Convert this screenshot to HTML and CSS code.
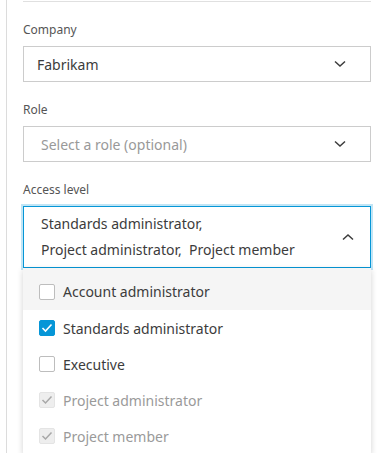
FILE: index.html
```html
<!DOCTYPE html>
<html lang="en">
<head>
    <meta charset="UTF-8">
    <meta name="viewport" content="width=device-width, initial-scale=1.0">
    <title>Add member</title>
    <link rel="stylesheet" href="styles.css">
</head>
<body>
    <div class="panel">
        <div class="content">
            <!-- Company -->
            <div class="field">
                <label class="label">Company</label>
                <div class="select">
                    <span class="value">Fabrikam</span>
                    <svg class="chevron" width="12" height="8" viewBox="0 0 12 8"><path d="M1 1.5 L6 6 L11 1.5" fill="none" stroke="#3c3c3c" stroke-width="1.5"/></svg>
                </div>
            </div>

            <!-- Role -->
            <div class="field">
                <label class="label">Role</label>
                <div class="select">
                    <span class="value placeholder">Select a role (optional)</span>
                    <svg class="chevron" width="12" height="8" viewBox="0 0 12 8"><path d="M1 1.5 L6 6 L11 1.5" fill="none" stroke="#3c3c3c" stroke-width="1.5"/></svg>
                </div>
            </div>

            <!-- Access level -->
            <div class="field">
                <label class="label">Access level</label>
                <div class="select open">
                    <span class="value multi">Standards administrator,<br>Project administrator,&nbsp; Project member</span>
                    <svg class="chevron" width="12" height="8" viewBox="0 0 12 8"><path d="M1 6.5 L6 2 L11 6.5" fill="none" stroke="#3c3c3c" stroke-width="1.5"/></svg>
                </div>
                <div class="menu">
                    <div class="item hover">
                        <span class="box"></span>Account administrator
                    </div>
                    <div class="item">
                        <span class="box checked"><svg width="12" height="10" viewBox="0 0 12 10"><path d="M1.5 5 L4.5 8 L10.5 1.5" fill="none" stroke="#fff" stroke-width="1.6"/></svg></span>Standards administrator
                    </div>
                    <div class="item">
                        <span class="box"></span>Executive
                    </div>
                    <div class="item disabled">
                        <span class="box"><svg width="12" height="10" viewBox="0 0 12 10"><path d="M1.5 5 L4.5 8 L10.5 1.5" fill="none" stroke="#a8a8a8" stroke-width="1.5"/></svg></span>Project administrator
                    </div>
                    <div class="item disabled">
                        <span class="box"><svg width="12" height="10" viewBox="0 0 12 10"><path d="M1.5 5 L4.5 8 L10.5 1.5" fill="none" stroke="#a8a8a8" stroke-width="1.5"/></svg></span>Project member
                    </div>
                </div>
            </div>
        </div>
    </div>
</body>
</html>
```

FILE: styles.css
```css
body {
    margin: 0;
    padding: 0;
    background: #ffffff;
    font-family: 'Noto Sans', 'Open Sans', sans-serif;
    color: #3c3c3c;
}
.panel {
    margin-left: 6px;
    border-left: 1px solid #dcdcdc;
    height: 453px;
    overflow: hidden;
}
.content {
    margin: 1px 8px 0 16px;
    border-top: 1px solid #e0e0e0;
    padding-top: 20px;
}
.field {
    margin-bottom: 20px;
}
.label {
    display: block;
    font-size: 12px;
    line-height: 16px;
    color: #555555;
    margin-bottom: 8px;
}
.select {
    display: flex;
    align-items: center;
    justify-content: space-between;
    border: 1px solid #cccccc;
    height: 34px;
    padding: 0 16px 0 13px;
    font-size: 14px;
}
.select.open {
    height: auto;
    padding: 4px 16px 4px 17px;
    border-color: #0696d7;
    box-shadow: 0 0 0 2px rgba(6, 150, 215, 0.25);
}
.value.placeholder {
    color: #999999;
    padding-left: 4px;
}
.value.multi {
    line-height: 26px;
}
.chevron {
    display: block;
    margin-right: 8px;
}
.open .chevron {
    margin-right: 0;
}
.menu {
    background: #ffffff;
    box-shadow: 0 2px 6px rgba(0, 0, 0, 0.18);
    border-radius: 0 0 2px 2px;
}
.item {
    display: flex;
    align-items: center;
    height: 36px;
    padding-left: 16px;
    font-size: 14px;
    color: #3c3c3c;
}
.item:first-child {
    height: 42px;
    padding-top: 5px;
    box-sizing: border-box;
}
.item.hover {
    background: #f5f5f5;
}
.item.disabled {
    color: #9a9a9a;
}
.box {
    width: 14px;
    height: 14px;
    border: 1px solid #bdbdbd;
    border-radius: 2px;
    background: #ffffff;
    margin-right: 8px;
    display: flex;
    align-items: center;
    justify-content: center;
}
.box.checked {
    background: #0696d7;
    border-color: #0696d7;
}
.disabled .box {
    background: #eeeeee;
    border-color: #e4e4e4;
}
```
